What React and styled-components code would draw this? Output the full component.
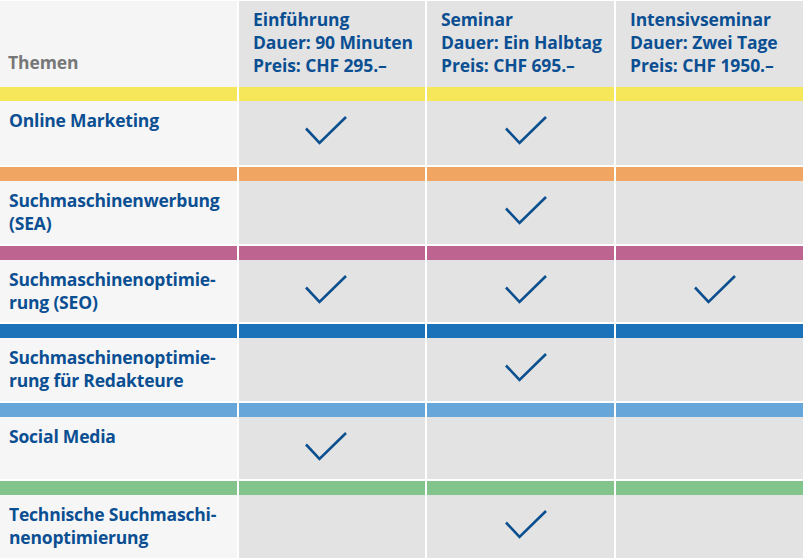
import React from 'react';
import styled, { createGlobalStyle } from 'styled-components';

const GlobalStyle = createGlobalStyle`
  html, body {
    margin: 0;
    padding: 0;
    background: #ffffff;
  }
  body {
    font-family: "Open Sans", "Liberation Sans", sans-serif;
  }
`;

const columns = [
  { title: 'Einführung', duration: 'Dauer: 90 Minuten', price: 'Preis: CHF 295.–', offset: -6 },
  { title: 'Seminar', duration: 'Dauer: Ein Halbtag', price: 'Preis: CHF 695.–', offset: 5 },
  { title: 'Intensivseminar', duration: 'Dauer: Zwei Tage', price: 'Preis: CHF 1950.–', offset: 5 },
];

const topics = [
  { name: ['Online Marketing'], color: '#f5e65a', checks: [true, true, false] },
  { name: ['Suchmaschinenwerbung', '(SEA)'], color: '#f0a662', checks: [false, true, false] },
  { name: ['Suchmaschinenoptimie-', 'rung (SEO)'], color: '#bd6590', checks: [true, true, true] },
  { name: ['Suchmaschinenoptimie-', 'rung für Redakteure'], color: '#1c72b8', checks: [false, true, false] },
  { name: ['Social Media'], color: '#67a6d9', checks: [true, false, false] },
  { name: ['Technische Suchmaschi-', 'nenoptimierung'], color: '#82c48b', checks: [false, true, false] },
];

const Table = styled.div`
  width: 803px;
  height: 560px;
  padding-top: 1px;
  box-sizing: border-box;
  display: flex;
  flex-direction: column;
  background: #ffffff;
  overflow: hidden;
`;

const Row = styled.div`
  display: grid;
  grid-template-columns: 237px 186px 187px 187px;
  column-gap: 2px;
`;

const HeaderRow = styled(Row)`
  height: 86px;
`;

const HeaderCell = styled.div`
  background: ${({ $first }) => ($first ? '#f5f5f5' : '#e3e3e3')};
  padding: ${({ $first }) => ($first ? '0 8px 13px' : '7px 14px 0')};
  display: flex;
  flex-direction: column;
  justify-content: ${({ $first }) => ($first ? 'flex-end' : 'flex-start')};
  font-size: 17.5px;
  font-weight: 700;
  line-height: 23px;
  letter-spacing: -0.1px;
  color: ${({ $first }) => ($first ? '#777777' : '#0b4f93')};
  white-space: nowrap;
`;

const Group = styled.div`
  display: flex;
  flex-direction: column;
  margin-top: ${({ $first }) => ($first ? '0' : '2px')};
`;

const BarRow = styled(Row)`
  height: 14px;
`;

const Bar = styled.div`
  background: ${({ $color }) => $color};
`;

const ContentRow = styled(Row)`
  height: ${({ $height }) => $height}px;
`;

const TopicCell = styled.div`
  background: #f6f6f6;
  padding: 8px 9px 0;
  font-size: 17.5px;
  font-weight: 700;
  line-height: 23px;
  letter-spacing: -0.2px;
  color: #0b4f93;
  white-space: nowrap;
`;

const CheckCell = styled.div`
  background: #e3e3e3;
  display: flex;
  justify-content: center;
  align-items: flex-start;
  padding-top: 15px;
`;

const CheckMark = styled.svg`
  width: 42px;
  height: 29px;
  margin-left: ${({ $offset }) => $offset * 2}px;
`;

const Check = ({ offset }) => (
  <CheckMark $offset={offset} viewBox="0 0 42 29">
    <polyline
      points="1,12.5 14.5,27 41,1"
      fill="none"
      stroke="#0b4f8f"
      strokeWidth="2.6"
    />
  </CheckMark>
);

const App = () => (
  <>
    <GlobalStyle />
    <Table>
      <HeaderRow>
        <HeaderCell $first>Themen</HeaderCell>
        {columns.map((col) => (
          <HeaderCell key={col.title}>
            <span>{col.title}</span>
            <span>{col.duration}</span>
            <span>{col.price}</span>
          </HeaderCell>
        ))}
      </HeaderRow>
      {topics.map((topic, i) => (
        <Group key={topic.name.join(' ')} $first={i === 0}>
          <BarRow>
            <Bar $color={topic.color} />
            <Bar $color={topic.color} />
            <Bar $color={topic.color} />
            <Bar $color={topic.color} />
          </BarRow>
          <ContentRow $height={i === 0 ? 64 : 62.5}>
            <TopicCell>
              {topic.name.map((line) => (
                <div key={line}>{line}</div>
              ))}
            </TopicCell>
            {topic.checks.map((checked, c) => (
              <CheckCell key={c}>{checked && <Check offset={columns[c].offset} />}</CheckCell>
            ))}
          </ContentRow>
        </Group>
      ))}
    </Table>
  </>
);

export default App;
